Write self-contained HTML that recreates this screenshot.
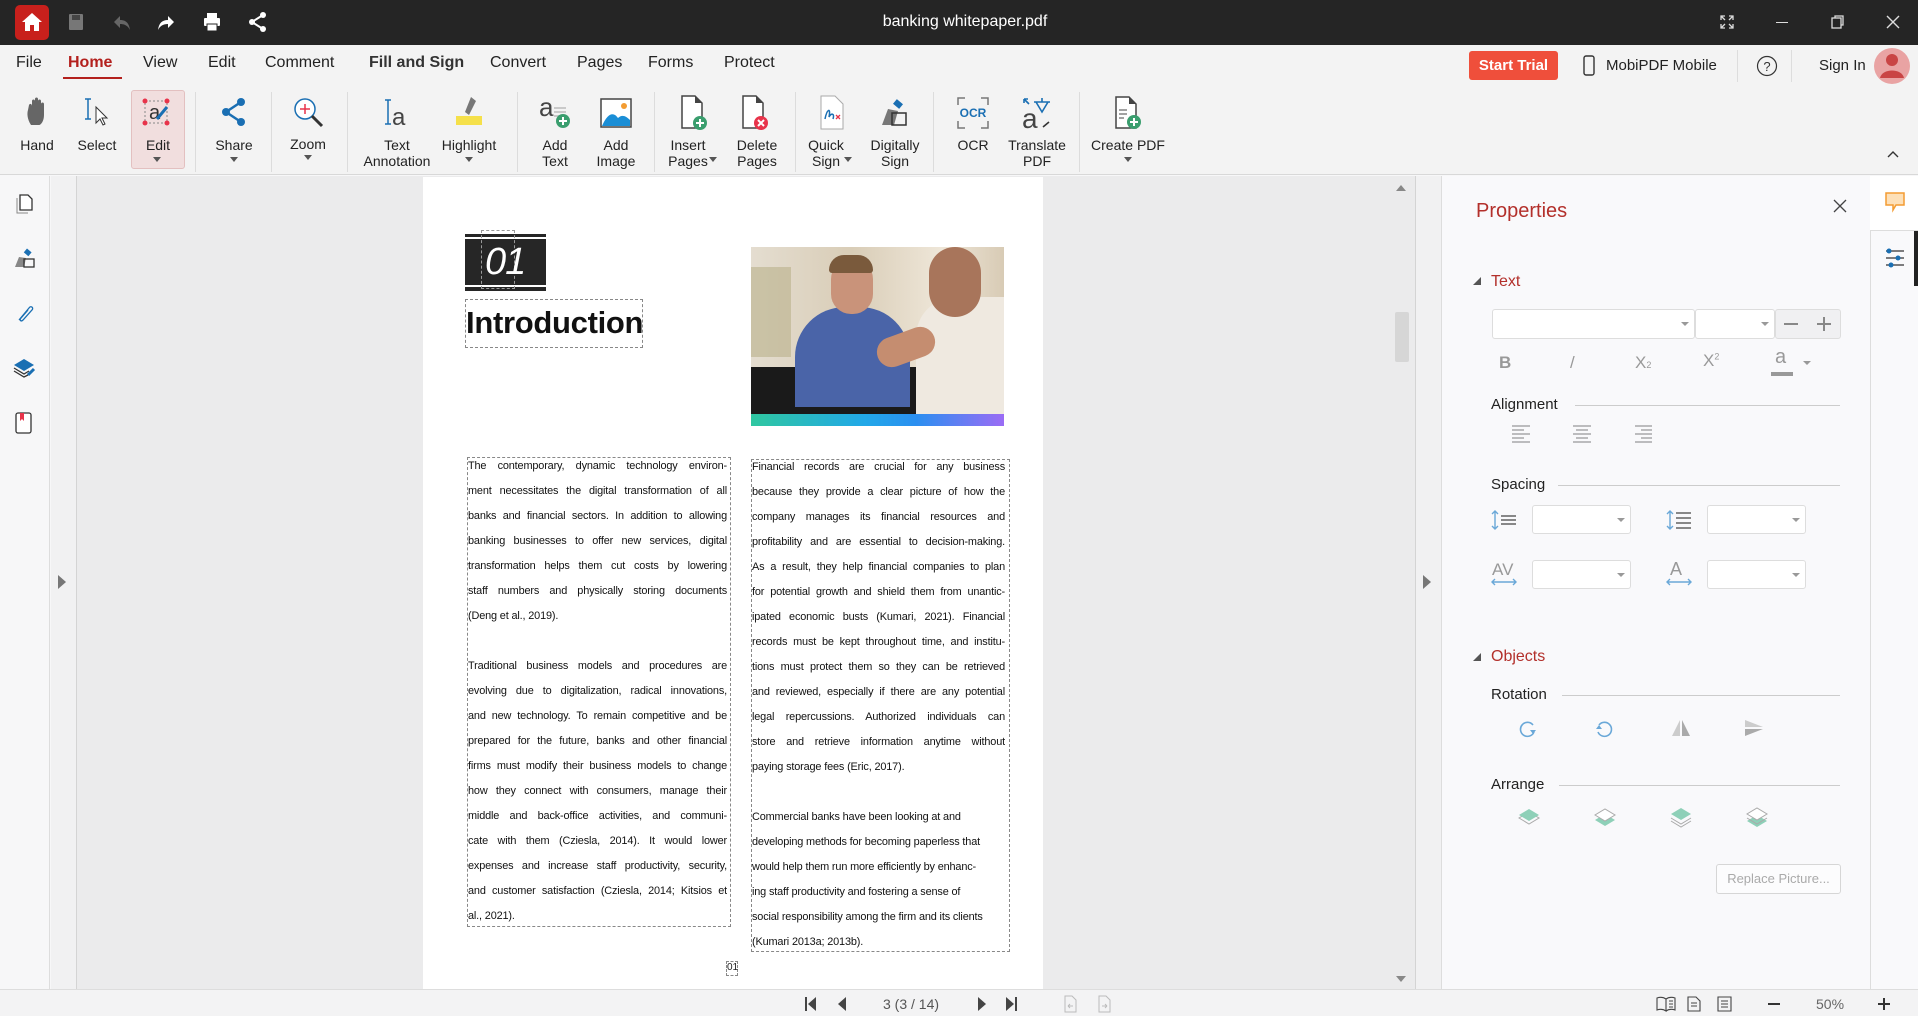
<!DOCTYPE html>
<html><head><meta charset="utf-8">
<style>
*{box-sizing:border-box;margin:0;padding:0}
body{width:1918px;height:1016px;overflow:hidden;position:relative;background:#f7f7f8;font-family:"Liberation Sans",sans-serif;color:#222}
.a{position:absolute}
.t{position:absolute;white-space:nowrap}
#title{left:0;top:0;width:1918px;height:45px;background:#252525}
.menu{top:54px;font-size:16px;color:#222}
.rl{font-size:14px;color:#222;text-align:center;line-height:16px;transform:translateX(-50%)}
.sep{width:1px;background:#dcdcdc;top:92px;height:80px}
.caret{width:0;height:0;border-left:4px solid transparent;border-right:4px solid transparent;border-top:5px solid #555}
.ln{height:25px;line-height:25px;font-size:10.9px;letter-spacing:-0.15px;text-align:justify;text-align-last:justify;white-space:nowrap;overflow:hidden;color:#111}
.ln.l{text-align-last:left}
.dd{border:1px solid #ddd;background:#fff;border-radius:3px}
.pl{font-size:15px;color:#222}
.hl{height:1px;background:#ccc}
</style></head><body>

<div id="title" class="a"></div>
<div class="a" style="left:15px;top:5px;width:34px;height:35px;background:#c8201c;border-radius:5px"></div>
<svg class="a" style="left:20px;top:11px" width="24" height="22" viewBox="0 0 24 22"><path d="M12 2 L22 11 H19 V20 H14 V14 H10 V20 H5 V11 H2 Z" fill="#fff"/></svg>
<svg class="a" style="left:68px;top:13px" width="16" height="18"><rect x="1" y="1" width="14" height="16" rx="1" fill="#777"/><rect x="4" y="2" width="8" height="5" fill="#444"/></svg>
<svg class="a" style="left:112px;top:12px" width="20" height="20"><path d="M8 4 L2 10 L8 16 V12 C13 12 16 14 18 18 C17 11 14 8 8 8 Z" fill="#666"/></svg>
<svg class="a" style="left:156px;top:12px" width="20" height="20"><path d="M12 4 L18 10 L12 16 V12 C7 12 4 14 2 18 C3 11 6 8 12 8 Z" fill="#fff"/></svg>
<svg class="a" style="left:202px;top:12px" width="20" height="20"><rect x="5" y="1" width="10" height="5" fill="#fff"/><rect x="2" y="6" width="16" height="8" rx="1" fill="#fff"/><rect x="5" y="12" width="10" height="7" fill="#fff" stroke="#252525"/></svg>
<svg class="a" style="left:248px;top:11px" width="20" height="22"><circle cx="15" cy="4" r="3" fill="#fff"/><circle cx="4" cy="11" r="3" fill="#fff"/><circle cx="15" cy="18" r="3" fill="#fff"/><path d="M15 4 L4 11 L15 18" stroke="#fff" stroke-width="2" fill="none"/></svg>
<div class="t" style="left:0;width:1930px;text-align:center;top:13px;color:#fff;font-size:16px">banking whitepaper.pdf</div>
<svg class="a" style="left:1720px;top:15px" width="14" height="14"><path d="M1 5V1H5M9 1H13V5M13 9V13H9M5 13H1V9M1 1L5 5M13 1L9 5M13 13L9 9M1 13L5 9" stroke="#ddd" fill="none" stroke-width="1.3"/></svg>
<div class="a" style="left:1776px;top:22px;width:12px;height:1px;background:#ddd"></div>
<svg class="a" style="left:1831px;top:15px" width="14" height="14"><rect x="1" y="3" width="9" height="10" stroke="#ddd" fill="none" stroke-width="1.3"/><path d="M4 3V1H12V10H10" stroke="#ddd" fill="none" stroke-width="1.3"/></svg>
<svg class="a" style="left:1886px;top:15px" width="14" height="14"><path d="M1 1L13 13M13 1L1 13" stroke="#ddd" stroke-width="1.4"/></svg>

<div class="a" style="left:0;top:45px;width:1918px;height:130px;background:#f3f3f3;border-bottom:1px solid #d8d8d8"></div>
<div class="t menu" style="left:16px">File</div>
<div class="t menu" style="left:68px;color:#b3201d;font-weight:bold">Home</div>
<div class="a" style="left:63px;top:77px;width:59px;height:2px;background:#b3201d"></div>
<div class="t menu" style="left:143px">View</div>
<div class="t menu" style="left:208px">Edit</div>
<div class="t menu" style="left:265px">Comment</div>
<div class="t menu" style="left:369px;font-weight:bold;color:#333">Fill and Sign</div>
<div class="t menu" style="left:490px">Convert</div>
<div class="t menu" style="left:577px">Pages</div>
<div class="t menu" style="left:648px">Forms</div>
<div class="t menu" style="left:724px">Protect</div>

<div class="a" style="left:1469px;top:51px;width:89px;height:29px;background:#ef4f3b;border-radius:3px;color:#fff;font-weight:bold;font-size:15px;text-align:center;line-height:29px">Start Trial</div>
<svg class="a" style="left:1583px;top:55px" width="12" height="21"><rect x="1" y="1" width="10" height="19" rx="2" fill="none" stroke="#333" stroke-width="1.4"/></svg>
<div class="t" style="left:1606px;top:57px;font-size:15px">MobiPDF Mobile</div>
<div class="a" style="left:1737px;top:50px;width:1px;height:32px;background:#ddd"></div>
<svg class="a" style="left:1756px;top:55px" width="22" height="22"><circle cx="11" cy="11" r="9.5" fill="none" stroke="#333" stroke-width="1.2"/><text x="11" y="16" font-size="13" text-anchor="middle" fill="#333" font-family="Liberation Sans">?</text></svg>
<div class="a" style="left:1791px;top:50px;width:1px;height:32px;background:#ddd"></div>
<div class="t" style="left:1819px;top:57px;font-size:15px">Sign In</div>
<svg class="a" style="left:1874px;top:48px" width="36" height="36"><circle cx="18" cy="18" r="18" fill="#e9a3a3"/><circle cx="18" cy="12" r="6" fill="#c94444"/><path d="M6 30 C8 20 28 20 30 30 Z" fill="#c94444"/></svg>

<div class="a" style="left:131px;top:90px;width:54px;height:79px;background:#f1dede;border:1px solid #e3c0c0;border-radius:3px"></div>
<svg class="a" style="left:25px;top:97px" width="24" height="30"><path d="M6 28 C2 22 2 16 3 13 L4 8 C5 6 7 7 7 9 V4 C7 2 10 2 10 4 V2 C10 0 13 0 13 2 V4 C13 2 16 2 16 4 V7 C16 5 19 5 19 7 V18 C19 24 16 28 14 28 Z" fill="#666"/></svg>
<svg class="a" style="left:82px;top:97px" width="30" height="30"><path d="M3 2H9M6 2V22M3 22H9" stroke="#1a6fb3" stroke-width="1.5"/><path d="M14 10 L14 26 L18 22 L21 28 L23 27 L20 21 L25 21 Z" fill="#fff" stroke="#333"/></svg>
<svg class="a" style="left:141px;top:97px" width="32" height="32"><rect x="4" y="4" width="22" height="22" fill="none" stroke="#888" stroke-dasharray="2 2"/><circle cx="4" cy="4" r="2.5" fill="#e8334a"/><circle cx="26" cy="4" r="2.5" fill="#e8334a"/><circle cx="4" cy="26" r="2.5" fill="#e8334a"/><circle cx="26" cy="26" r="2.5" fill="#e8334a"/><text x="8" y="22" font-size="20" fill="#333" font-family="Liberation Sans">a</text><path d="M16 22 L26 10" stroke="#1a6fb3" stroke-width="3"/></svg>
<svg class="a" style="left:220px;top:97px" width="28" height="30"><circle cx="21" cy="5" r="4" fill="#1a6fb3"/><circle cx="6" cy="15" r="4" fill="#1a6fb3"/><circle cx="21" cy="25" r="4" fill="#1a6fb3"/><path d="M21 5 L6 15 L21 25" stroke="#1a6fb3" stroke-width="2.5" fill="none"/></svg>
<svg class="a" style="left:292px;top:96px" width="34" height="34"><circle cx="13" cy="13" r="10" fill="#fff" stroke="#1a6fb3" stroke-width="1.5"/><path d="M13 8V18M8 13H18" stroke="#e8334a" stroke-width="1.5"/><path d="M20 20 L30 30" stroke="#333" stroke-width="3"/></svg>
<svg class="a" style="left:383px;top:98px" width="28" height="30"><path d="M2 2H8M5 2V26M2 26H8" stroke="#1a6fb3" stroke-width="1.5"/><text x="9" y="27" font-size="24" fill="#444" font-family="Liberation Sans">a</text></svg>
<svg class="a" style="left:453px;top:95px" width="32" height="34"><path d="M18 2 L23 6 L16 20 L12 17 Z" fill="#777"/><rect x="3" y="21" width="26" height="9" fill="#f5e04a"/></svg>
<svg class="a" style="left:538px;top:94px" width="34" height="36"><text x="1" y="22" font-size="26" fill="#444" font-family="Liberation Sans">a</text><path d="M16 14H28M16 18H28M16 22H24" stroke="#bbb" stroke-width="1.5"/><circle cx="25" cy="27" r="7" fill="#3a9e6e"/><path d="M25 23V31M21 27H29" stroke="#fff" stroke-width="2"/></svg>
<svg class="a" style="left:600px;top:98px" width="32" height="30"><rect x="1" y="1" width="30" height="28" fill="#fff" stroke="#444" stroke-width="1.5"/><path d="M2 28 C8 14 14 14 18 20 C22 16 26 18 30 22 V28 Z" fill="#1a8ed6"/><circle cx="24" cy="8" r="3" fill="#f39c32"/></svg>
<svg class="a" style="left:680px;top:95px" width="30" height="36"><path d="M2 1H15L22 8V33H2Z" fill="#fff" stroke="#444" stroke-width="1.5"/><path d="M15 1V8H22" fill="#444"/><circle cx="20" cy="28" r="7" fill="#3a9e6e"/><path d="M20 24V32M16 28H24" stroke="#fff" stroke-width="2"/></svg>
<svg class="a" style="left:741px;top:95px" width="30" height="36"><path d="M2 1H15L22 8V33H2Z" fill="#fff" stroke="#444" stroke-width="1.5"/><path d="M15 1V8H22" fill="#444"/><circle cx="20" cy="28" r="7" fill="#e8334a"/><path d="M17 25L23 31M23 25L17 31" stroke="#fff" stroke-width="2"/></svg>
<svg class="a" style="left:817px;top:95px" width="32" height="36"><path d="M4 1H18L26 9V34H4Z" fill="#fff" stroke="#aaa"/><path d="M8 24 C10 14 14 12 12 22 C14 18 18 18 16 24" stroke="#1a6fb3" fill="none" stroke-width="1.5"/><path d="M19 20L23 24M23 20L19 24" stroke="#e8334a" stroke-width="1.3"/></svg>
<svg class="a" style="left:878px;top:95px" width="32" height="34"><path d="M4 30 L10 14 L20 16 L16 30 Z" fill="#777"/><rect x="16" y="6" width="8" height="6" transform="rotate(40 20 9)" fill="#1a6fb3"/><rect x="14" y="18" width="14" height="12" fill="none" stroke="#333" stroke-width="1.5"/></svg>
<svg class="a" style="left:957px;top:97px" width="32" height="32"><path d="M1 8V1H8M24 1H31V8M31 24V31H24M8 31H1V24" stroke="#777" fill="none" stroke-width="1.5"/><text x="16" y="20" font-size="12" font-weight="bold" fill="#1a6fb3" text-anchor="middle" font-family="Liberation Sans">OCR</text></svg>
<svg class="a" style="left:1021px;top:95px" width="32" height="36"><text x="1" y="33" font-size="28" fill="#444" font-family="Liberation Sans">a</text><path d="M13 7H29M21 3V7M15 7 L21 17 L27 7" stroke="#1a6fb3" fill="none" stroke-width="1.6"/><path d="M8 9 L3 4 M3 4H7M3 4V8" stroke="#1a6fb3" stroke-width="1.6"/><path d="M22 32 L28 27" stroke="#333" stroke-width="1.6"/></svg>
<svg class="a" style="left:1114px;top:96px" width="30" height="34"><path d="M2 1H15L22 8V32H2Z" fill="#fff" stroke="#444" stroke-width="1.5"/><path d="M15 1V8H22" fill="#444"/><path d="M5 14H13M5 18H13M5 22H10" stroke="#444"/><circle cx="20" cy="26" r="7" fill="#3a9e6e"/><path d="M20 22V30M16 26H24" stroke="#fff" stroke-width="2"/></svg>
<div class="t rl" style="left:37px;top:137px">Hand</div>
<div class="t rl" style="left:97px;top:137px">Select</div>
<div class="t rl" style="left:158px;top:137px">Edit</div>
<div class="t rl" style="left:234px;top:137px">Share</div>
<div class="t rl" style="left:308px;top:136px">Zoom</div>
<div class="t rl" style="left:397px;top:137px">Text<br>Annotation</div>
<div class="t rl" style="left:469px;top:137px">Highlight</div>
<div class="t rl" style="left:555px;top:137px">Add<br>Text</div>
<div class="t rl" style="left:616px;top:137px">Add<br>Image</div>
<div class="t rl" style="left:688px;top:137px">Insert<br>Pages</div>
<div class="t rl" style="left:757px;top:137px">Delete<br>Pages</div>
<div class="t rl" style="left:826px;top:137px">Quick<br>Sign</div>
<div class="t rl" style="left:895px;top:137px">Digitally<br>Sign</div>
<div class="t rl" style="left:973px;top:137px">OCR</div>
<div class="t rl" style="left:1037px;top:137px">Translate<br>PDF</div>
<div class="t rl" style="left:1128px;top:137px">Create PDF</div>
<div class="a caret" style="left:153px;top:157px"></div>
<div class="a caret" style="left:230px;top:157px"></div>
<div class="a caret" style="left:304px;top:155px"></div>
<div class="a caret" style="left:465px;top:157px"></div>
<div class="a caret" style="left:709px;top:157px"></div>
<div class="a caret" style="left:844px;top:157px"></div>
<div class="a caret" style="left:1124px;top:157px"></div>
<div class="a sep" style="left:195px"></div><div class="a sep" style="left:271px"></div><div class="a sep" style="left:347px"></div><div class="a sep" style="left:517px"></div><div class="a sep" style="left:654px"></div><div class="a sep" style="left:795px"></div><div class="a sep" style="left:933px"></div><div class="a sep" style="left:1079px"></div>
<svg class="a" style="left:1886px;top:150px" width="14" height="9"><path d="M2 7L7 2L12 7" stroke="#333" fill="none" stroke-width="1.4"/></svg>

<div class="a" style="left:0;top:176px;width:50px;height:813px;background:#f7f7f8;border-right:1px solid #ddd"></div>
<svg class="a" style="left:15px;top:193px" width="20" height="22"><path d="M2 5V20H13" stroke="#888" fill="none"/><path d="M5 2H13L17 6V17H5Z" fill="#fff" stroke="#333" stroke-width="1.3"/></svg>
<svg class="a" style="left:13px;top:247px" width="24" height="22"><path d="M2 20 L6 10 L13 11 L11 20 Z" fill="#888"/><rect x="12" y="3" width="6" height="5" transform="rotate(40 15 5)" fill="#1a6fb3"/><rect x="11" y="12" width="10" height="8" fill="none" stroke="#333" stroke-width="1.3"/></svg>
<svg class="a" style="left:14px;top:302px" width="20" height="22"><path d="M5 18 L15 6 C17 3 20 6 18 8 L9 18 C7 20 5 18 7 16 L14 8" stroke="#1a6fb3" fill="none" stroke-width="1.3"/></svg>
<svg class="a" style="left:12px;top:357px" width="24" height="22"><path d="M2 8 L12 2 L22 8 L12 14 Z" fill="#1a6fb3"/><path d="M2 11 L12 17 L17 14M2 14 L12 20 L16 18" stroke="#333" fill="none" stroke-width="1.3"/><path d="M16 18 L22 12" stroke="#1a6fb3" stroke-width="3"/></svg>
<svg class="a" style="left:14px;top:411px" width="20" height="24"><rect x="2" y="2" width="15" height="20" rx="2" fill="#fff" stroke="#333" stroke-width="1.3"/><path d="M6 2V10L8 8L10 10V2Z" fill="#e8334a"/></svg>

<div class="a" style="left:51px;top:176px;width:25px;height:813px;background:#f1f1f2"></div>
<div class="a" style="left:58px;top:575px;width:0;height:0;border-top:7px solid transparent;border-bottom:7px solid transparent;border-left:8px solid #777"></div>
<div class="a" style="left:76px;top:176px;width:1339px;height:813px;background:#ebebec;border-left:1px solid #d4d4d4"></div>
<div class="a" style="left:1393px;top:176px;width:22px;height:813px;background:#ebebec"></div>
<div class="a" style="left:1396px;top:185px;width:0;height:0;border-left:5px solid transparent;border-right:5px solid transparent;border-bottom:6px solid #888"></div>
<div class="a" style="left:1396px;top:976px;width:0;height:0;border-left:5px solid transparent;border-right:5px solid transparent;border-top:6px solid #888"></div>
<div class="a" style="left:1395px;top:312px;width:14px;height:50px;background:#d6d6d6;border-radius:2px"></div>
<div class="a" style="left:1415px;top:176px;width:26px;height:813px;background:#f1f1f2;border-left:1px solid #d4d4d4"></div>
<div class="a" style="left:1423px;top:575px;width:0;height:0;border-top:7px solid transparent;border-bottom:7px solid transparent;border-left:8px solid #777"></div>

<div class="a" style="left:423px;top:177px;width:620px;height:812px;background:#fff"></div>
<div class="a" style="left:465px;top:234px;width:81px;height:57px;background:#262626"></div>
<div class="a" style="left:465px;top:237px;width:81px;height:2px;background:#fff"></div>
<div class="a" style="left:465px;top:285px;width:81px;height:2px;background:#fff"></div>
<div class="a" style="left:481px;top:230px;width:34px;height:59px;border:1px dashed #999"></div>
<div class="t" style="left:485px;top:241px;font-size:38px;color:#fff;font-style:italic;font-weight:300;letter-spacing:-1px">01</div>
<div class="a" style="left:465px;top:299px;width:178px;height:49px;border:1px dashed #888"></div>
<div class="t" style="left:466px;top:305px;font-size:31px;font-weight:bold;color:#111;letter-spacing:-0.3px">Introduction</div>
<div class="a" style="left:751px;top:247px;width:253px;height:167px;overflow:hidden;background:linear-gradient(90deg,#e4ddd0 0%,#d9cdb7 40%,#eee6d8 75%,#d8cbb5 100%)">
 <div class="a" style="left:0;top:120px;width:253px;height:50px;background:#1a1a1a"></div>
 <div class="a" style="left:0;top:20px;width:40px;height:90px;background:#b9b08a;opacity:.6"></div>
 <div class="a" style="left:44px;top:60px;width:115px;height:100px;background:#4a64a8;border-radius:50px 50px 0 0"></div>
 <div class="a" style="left:80px;top:12px;width:42px;height:55px;background:#c9937a;border-radius:20px"></div>
 <div class="a" style="left:78px;top:8px;width:44px;height:18px;background:#7a5a3c;border-radius:20px 20px 4px 4px"></div>
 <div class="a" style="left:165px;top:50px;width:95px;height:120px;background:#efe9e0;border-radius:40px 0 0 0"></div>
 <div class="a" style="left:178px;top:0;width:52px;height:70px;background:#a8755b;border-radius:26px"></div>
 <div class="a" style="left:125px;top:85px;width:60px;height:30px;background:#c58d70;border-radius:20px;transform:rotate(-20deg)"></div>
</div>
<div class="a" style="left:751px;top:414px;width:253px;height:12px;background:linear-gradient(90deg,#2fc7a0,#22a8e8 45%,#2a8ff0 65%,#9b6cf5)"></div>

<div class="a" style="left:467px;top:457px;width:264px;height:470px;border:1px dashed #888"></div>
<div class="a" style="left:468px;top:454px;width:259px">
<div class="ln">The contemporary, dynamic technology environ-</div>
<div class="ln">ment necessitates the digital transformation of all</div>
<div class="ln">banks and financial sectors. In addition to allowing</div>
<div class="ln">banking businesses to offer new services, digital</div>
<div class="ln">transformation helps them cut costs by lowering</div>
<div class="ln">staff numbers and physically storing documents</div>
<div class="ln l">(Deng et al., 2019).</div>
<div class="ln l">&nbsp;</div>
<div class="ln">Traditional business models and procedures are</div>
<div class="ln">evolving due to digitalization, radical innovations,</div>
<div class="ln">and new technology. To remain competitive and be</div>
<div class="ln">prepared for the future, banks and other financial</div>
<div class="ln">firms must modify their business models to change</div>
<div class="ln">how they connect with consumers, manage their</div>
<div class="ln">middle and back-office activities, and communi-</div>
<div class="ln">cate with them (Cziesla, 2014). It would lower</div>
<div class="ln">expenses and increase staff productivity, security,</div>
<div class="ln">and customer satisfaction (Cziesla, 2014; Kitsios et</div>
<div class="ln l">al., 2021).</div>
</div>
<div class="a" style="left:751px;top:459px;width:259px;height:493px;border:1px dashed #888"></div>
<div class="a" style="left:752px;top:455px;width:253px">
<div class="ln">Financial records are crucial for any business</div>
<div class="ln">because they provide a clear picture of how the</div>
<div class="ln">company manages its financial resources and</div>
<div class="ln">profitability and are essential to decision-making.</div>
<div class="ln">As a result, they help financial companies to plan</div>
<div class="ln">for potential growth and shield them from unantic-</div>
<div class="ln">ipated economic busts (Kumari, 2021). Financial</div>
<div class="ln">records must be kept throughout time, and institu-</div>
<div class="ln">tions must protect them so they can be retrieved</div>
<div class="ln">and reviewed, especially if there are any potential</div>
<div class="ln">legal repercussions. Authorized individuals can</div>
<div class="ln">store and retrieve information anytime without</div>
<div class="ln l">paying storage fees (Eric, 2017).</div>
<div class="ln l">&nbsp;</div>
<div class="ln l">Commercial banks have been looking at and</div>
<div class="ln l">developing methods for becoming paperless that</div>
<div class="ln l">would help them run more efficiently by enhanc-</div>
<div class="ln l">ing staff productivity and fostering a sense of</div>
<div class="ln l">social responsibility among the firm and its clients</div>
<div class="ln l">(Kumari 2013a; 2013b).</div>
</div>
<div class="a" style="left:726px;top:961px;width:12px;height:15px;border:1px dashed #888"></div>
<div class="t" style="left:727px;top:962px;font-size:10px">01</div>

<div class="a" style="left:1441px;top:176px;width:429px;height:813px;background:#f9f9fb;border-left:1px solid #ddd"></div>
<div class="t" style="left:1476px;top:200px;font-size:20px;color:#b3302b">Properties</div>
<svg class="a" style="left:1833px;top:199px" width="14" height="14"><path d="M1 1L13 13M13 1L1 13" stroke="#444" stroke-width="1.3"/></svg>
<div class="a" style="left:1473px;top:277px;width:0;height:0;border-left:8px solid transparent;border-bottom:8px solid #555"></div>
<div class="t" style="left:1491px;top:273px;font-size:16px;color:#b3302b">Text</div>
<div class="a dd" style="left:1492px;top:309px;width:203px;height:30px"></div>
<div class="a dd" style="left:1695px;top:309px;width:80px;height:30px"></div>
<div class="a" style="left:1775px;top:309px;width:66px;height:30px;background:#f0f0f2;border:1px solid #ddd;border-radius:3px"></div>
<div class="a" style="left:1681px;top:322px;border-left:4px solid transparent;border-right:4px solid transparent;border-top:4px solid #999"></div>
<div class="a" style="left:1761px;top:322px;border-left:4px solid transparent;border-right:4px solid transparent;border-top:4px solid #999"></div>
<div class="a" style="left:1784px;top:323px;width:14px;height:1.5px;background:#888"></div>
<div class="a" style="left:1817px;top:323px;width:14px;height:1.5px;background:#888"></div>
<div class="a" style="left:1823px;top:317px;width:1.5px;height:14px;background:#888"></div>
<div class="t" style="left:1499px;top:353px;font-size:17px;font-weight:bold;color:#999">B</div>
<div class="t" style="left:1570px;top:353px;font-size:17px;color:#999">/</div>
<div class="t" style="left:1635px;top:353px;font-size:17px;color:#999">X<span style="font-size:9px">2</span></div>
<div class="t" style="left:1703px;top:351px;font-size:17px;color:#999">X<sup style="font-size:9px">2</sup></div>
<div class="t" style="left:1775px;top:346px;font-size:20px;color:#999">a</div>
<div class="a" style="left:1771px;top:372px;width:22px;height:4px;background:#999"></div>
<div class="a" style="left:1803px;top:361px;border-left:4px solid transparent;border-right:4px solid transparent;border-top:4px solid #999"></div>
<div class="t pl" style="left:1491px;top:396px">Alignment</div><div class="a hl" style="left:1575px;top:405px;width:265px"></div>
<svg class="a" style="left:1512px;top:425px" width="140" height="18"><g stroke="#999" stroke-width="1.2"><path d="M0 1H18M0 5H12M0 9H18M0 13H12M0 17H18"/><path d="M61 1H79M64 5H76M61 9H79M64 13H76M61 17H79"/><path d="M123 1H141M129 5H141M123 9H141M129 13H141M123 17H141"/></g></svg>
<div class="t pl" style="left:1491px;top:476px">Spacing</div><div class="a hl" style="left:1558px;top:485px;width:282px"></div>
<svg class="a" style="left:1491px;top:509px" width="26" height="22"><path d="M4 2V20M1 5L4 2L7 5M1 17L4 20L7 17" stroke="#6aa8d8" fill="none" stroke-width="1.4"/><path d="M10 7H25M10 11H25M10 15H25" stroke="#888" stroke-width="2"/></svg>
<svg class="a" style="left:1666px;top:509px" width="26" height="22"><path d="M4 2V20M1 5L4 2L7 5M1 17L4 20L7 17" stroke="#6aa8d8" fill="none" stroke-width="1.4"/><path d="M10 4H25M10 9H25M10 14H25M10 19H25" stroke="#888" stroke-width="2"/></svg>
<div class="a dd" style="left:1532px;top:505px;width:99px;height:29px"></div>
<div class="a dd" style="left:1707px;top:505px;width:99px;height:29px"></div>
<div class="t" style="left:1492px;top:560px;font-size:17px;color:#999">AV</div>
<svg class="a" style="left:1491px;top:578px" width="26" height="8"><path d="M1 4H25M4 1L1 4L4 7M22 1L25 4L22 7" stroke="#6aa8d8" fill="none" stroke-width="1.4"/></svg>
<div class="t" style="left:1670px;top:559px;font-size:18px;color:#999">A</div>
<svg class="a" style="left:1666px;top:578px" width="26" height="8"><path d="M1 4H25M4 1L1 4L4 7M22 1L25 4L22 7" stroke="#6aa8d8" fill="none" stroke-width="1.4"/></svg>
<div class="a dd" style="left:1532px;top:560px;width:99px;height:29px"></div>
<div class="a dd" style="left:1707px;top:560px;width:99px;height:29px"></div>
<div class="a" style="left:1617px;top:518px;border-left:4px solid transparent;border-right:4px solid transparent;border-top:4px solid #999"></div>
<div class="a" style="left:1792px;top:518px;border-left:4px solid transparent;border-right:4px solid transparent;border-top:4px solid #999"></div>
<div class="a" style="left:1617px;top:573px;border-left:4px solid transparent;border-right:4px solid transparent;border-top:4px solid #999"></div>
<div class="a" style="left:1792px;top:573px;border-left:4px solid transparent;border-right:4px solid transparent;border-top:4px solid #999"></div>

<div class="a" style="left:1473px;top:653px;width:0;height:0;border-left:8px solid transparent;border-bottom:8px solid #555"></div>
<div class="t" style="left:1491px;top:648px;font-size:16px;color:#b3302b">Objects</div>
<div class="t pl" style="left:1491px;top:686px">Rotation</div><div class="a hl" style="left:1562px;top:695px;width:278px"></div>
<svg class="a" style="left:1519px;top:720px" width="18" height="18"><path d="M14 5 A7 7 0 1 0 15 12" stroke="#6aa8d8" fill="none" stroke-width="1.6"/><path d="M11 10H17L14 14Z" fill="#6aa8d8"/></svg>
<svg class="a" style="left:1595px;top:720px" width="18" height="18"><path d="M4 5 A7 7 0 1 1 3 12" stroke="#6aa8d8" fill="none" stroke-width="1.6"/><path d="M1 9H7L4 5Z" fill="#6aa8d8"/></svg>
<svg class="a" style="left:1671px;top:719px" width="20" height="18"><path d="M9 1V17H1Z" fill="#ccc"/><path d="M11 1V17H19Z" fill="#aaa"/></svg>
<svg class="a" style="left:1744px;top:719px" width="20" height="18"><path d="M1 1L19 8H1Z" fill="#ccc"/><path d="M1 10H19L1 17Z" fill="#aaa"/></svg>
<div class="t pl" style="left:1491px;top:776px">Arrange</div><div class="a hl" style="left:1559px;top:785px;width:281px"></div>
<svg class="a" style="left:1518px;top:808px" width="22" height="20"><path d="M1 10L11 16L21 10L11 4Z" fill="none" stroke="#aaa"/><path d="M1 7L11 13L21 7L11 1Z" fill="#8ed0b8"/></svg>
<svg class="a" style="left:1594px;top:808px" width="22" height="20"><path d="M1 12L11 18L21 12L11 6Z" fill="#8ed0b8"/><path d="M1 7L11 13L21 7L11 1Z" fill="#fff" stroke="#aaa"/></svg>
<svg class="a" style="left:1670px;top:807px" width="22" height="22"><path d="M1 14L11 20L21 14M1 11L11 17L21 11" fill="none" stroke="#aaa"/><path d="M1 7L11 13L21 7L11 1Z" fill="#8ed0b8"/></svg>
<svg class="a" style="left:1746px;top:807px" width="22" height="22"><path d="M1 14L11 20L21 14L11 8Z" fill="#8ed0b8"/><path d="M1 11L11 17L21 11" fill="none" stroke="#aaa"/><path d="M1 7L11 13L21 7L11 1Z" fill="#fff" stroke="#aaa"/></svg>
<div class="a" style="left:1716px;top:864px;width:125px;height:30px;border:1px solid #d6d6d6;border-radius:3px;background:#fcfcfd;color:#aaa;font-size:13px;text-align:center;line-height:28px">Replace Picture...</div>

<div class="a" style="left:1870px;top:176px;width:48px;height:813px;background:#f9f9fb;border-left:1px solid #ddd"></div>
<div class="a" style="left:1870px;top:176px;width:48px;height:55px;background:#fff;border-bottom:1px solid #ddd"></div>
<svg class="a" style="left:1884px;top:191px" width="22" height="24"><path d="M2 2H20V14H12L9 19V14H2Z" fill="#fde0b8" stroke="#f39c32" stroke-width="1.5"/></svg>
<div class="a" style="left:1914px;top:231px;width:4px;height:55px;background:#222"></div>
<svg class="a" style="left:1884px;top:248px" width="22" height="20"><g stroke="#333" stroke-width="1.2"><path d="M2 3H20M2 10H20M2 17H20"/></g><circle cx="5" cy="3" r="2.5" fill="#1a6fb3"/><circle cx="14" cy="10" r="2.5" fill="#1a6fb3"/><circle cx="7" cy="17" r="2.5" fill="#1a6fb3"/></svg>

<div class="a" style="left:0;top:989px;width:1918px;height:27px;background:#f3f3f4;border-top:1px solid #ddd"></div>
<svg class="a" style="left:804px;top:996px" width="220" height="16"><g fill="#444"><rect x="1" y="1" width="2" height="14"/><path d="M12 1V15L4 8Z"/><path d="M42 1V15L34 8Z"/><path d="M174 1V15L182 8Z"/><path d="M202 1V15L210 8Z"/><rect x="211" y="1" width="2" height="14"/></g></svg>
<div class="t" style="left:883px;top:996px;font-size:14px;color:#555">3 (3 / 14)</div>
<svg class="a" style="left:1064px;top:995px" width="52" height="18"><g fill="none" stroke="#bbb"><path d="M1 1H8L12 5V17H1Z"/><path d="M35 1H42L46 5V17H35Z"/></g><path d="M4 11H9M4 11L6 9M4 11L6 13M38 11H43M43 11L41 9M43 11L41 13" stroke="#bbb"/></svg>
<svg class="a" style="left:1656px;top:996px" width="84" height="16"><g fill="none" stroke="#444" stroke-width="1.1"><path d="M1 2C4 1 7 1 10 3V15C7 13 4 13 1 14ZM10 3C13 1 16 1 19 2V14C16 13 13 13 10 15"/><path d="M13 5H17M13 8H17M13 11H17"/><path d="M32 1H40L44 5V15H32ZM35 7H41M35 10H41"/><path d="M62 1H75V15H62ZM65 5H72M65 8H72M65 11H72"/></g></svg>
<div class="a" style="left:1768px;top:1003px;width:12px;height:2px;background:#333"></div>
<div class="t" style="left:1816px;top:996px;font-size:14px;color:#666">50%</div>
<div class="a" style="left:1878px;top:1003px;width:12px;height:2px;background:#333"></div>
<div class="a" style="left:1883px;top:998px;width:2px;height:12px;background:#333"></div>
</body></html>
